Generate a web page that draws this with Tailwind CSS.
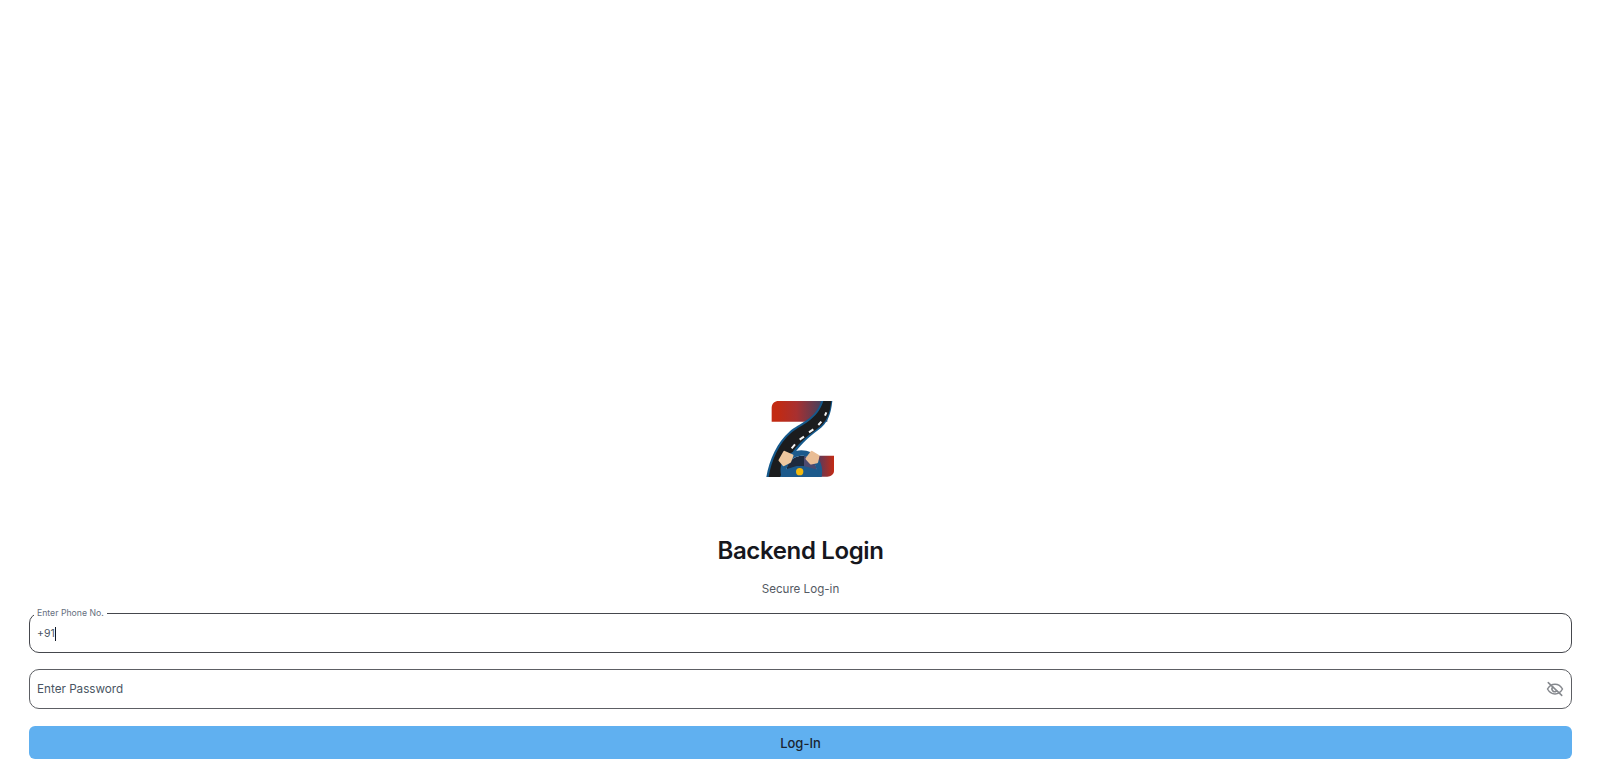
<!DOCTYPE html>
<html lang="en">
<head>
    <meta charset="UTF-8">
    <meta name="viewport" content="width=device-width, initial-scale=1.0">
    <title>Backend Login</title>
    <script src="https://cdn.jsdelivr.net/npm/@tailwindcss/browser@4"></script>
</head>
<body class="bg-white font-['Inter',sans-serif]">
    <main class="h-[777px] flex flex-col justify-end pl-[29px] pr-[28px] pb-[18px]">
        <!-- Logo -->
        <div class="flex justify-center -ml-px">
            <svg class="w-[120px] h-[100px] block" viewBox="0 0 360 300">
                <defs>
                    <linearGradient id="topRed" x1="0" y1="0" x2="1" y2="0">
                        <stop offset="0.1" stop-color="#c22a12"/>
                        <stop offset="0.45" stop-color="#a83030"/>
                        <stop offset="1" stop-color="#2f4468"/>
                    </linearGradient>
                    <linearGradient id="bottomRed" x1="0" y1="0" x2="1" y2="0">
                        <stop offset="0" stop-color="#5a3a5c"/>
                        <stop offset="1" stop-color="#c42a14"/>
                    </linearGradient>
                </defs>
                <path d="M95 110V68C95 56 104 48 116 48H262V110Z" fill="url(#topRed)"/>
                <path d="M235 212H282V258C282 268 272 275 262 275H235Z" fill="url(#bottomRed)"/>
                <path d="M244 48H277C273 86 264 114 234 136C204 158 176 184 160 212L125 276H79C88 222 112 172 148 140C178 114 226 104 244 48Z" fill="#15598c"/>
                <path d="M250 48H274C270 86 260 112 230 133C198 156 170 180 154 208L120 276H86C95 226 116 176 153 144C184 118 232 106 250 48Z" fill="#1b1c1e"/>
                <path d="M255 92L259 82M235 120L244 110M207 142L220 133M179 164L192 155M155 190L165 178" stroke="#f4f4f4" stroke-width="6" fill="none"/>
                <!-- steering wheel -->
                <path d="M141 276C132 242 154 214 184 212C216 212 236 244 229 276Z" fill="#1e2a3e"/>
                <path d="M192 213C216 218 234 244 230 264H192Z" fill="#4b4a70"/>
                <path d="M125 276C112 236 140 198 184 196C226 196 254 232 245 276H229C236 244 216 212 184 212C154 214 132 242 141 276Z" fill="#1c5a8c"/>
                <path d="M131 255L170 243H190L236 255L232 276H136Z" fill="#1c5a8c"/>
                <circle cx="179" cy="260" r="11" fill="#f2b90f"/>
                <path d="M119 226L133 201L157 212L150 230L131 240Z" fill="#edc79f" stroke="#edc79f" stroke-width="7" stroke-linejoin="round"/>
                <path d="M200 221L215 201L235 213L231 231L213 235Z" fill="#e9bd95" stroke="#e9bd95" stroke-width="7" stroke-linejoin="round"/>
            </svg>
        </div>
        <!-- Heading -->
        <h1 class="mt-[50px] text-center text-[24px] leading-[32px] font-semibold tracking-[-0.015em] text-[#16171d]">Backend Login</h1>
        <p class="mt-[13px] text-center text-[11.6px] leading-[18px] text-[#555a63]">Secure Log-in</p>
        <!-- Form -->
        <form class="mt-[15px]">
            <div class="relative h-10 border-[1.5px] border-[#45474d] rounded-[10px] flex items-center pl-[7px] pt-px text-[10.5px] text-[#4a5563]">
                <span class="absolute -top-[6px] left-[4px] bg-white px-[3px] text-[8.7px] leading-[10px] text-[#667080]">Enter Phone No.</span>
                <span>+91</span><span class="w-[1.5px] h-[14px] bg-[#111827]"></span>
            </div>
            <div class="mt-[16px] h-10 border-[1.5px] border-[#5d5f64] rounded-[10px] flex items-center justify-between pl-[7px] pt-px pr-[7px] text-[11.7px] text-[#4a5563]">
                <span>Enter Password</span>
                <svg class="w-[18px] h-[18px] -mt-px" viewBox="0 0 24 24" fill="none" stroke="#85888d" stroke-width="2" stroke-linecap="round" stroke-linejoin="round">
                    <path d="M2 12s3.6-6.5 10-6.5S22 12 22 12s-3.6 6.5-10 6.5S2 12 2 12Z"/>
                    <path d="M9 9.5a3.5 3.5 0 0 0 5 5"/>
                    <path d="M3 3.5l18 17"/>
                </svg>
            </div>
            <button type="button" class="mt-[17px] w-full h-[33px] pt-[3px] rounded-md bg-[#60b0f0] text-[13px] font-medium text-[#1b2430]">Log-In</button>
        </form>
    </main>
</body>
</html>
